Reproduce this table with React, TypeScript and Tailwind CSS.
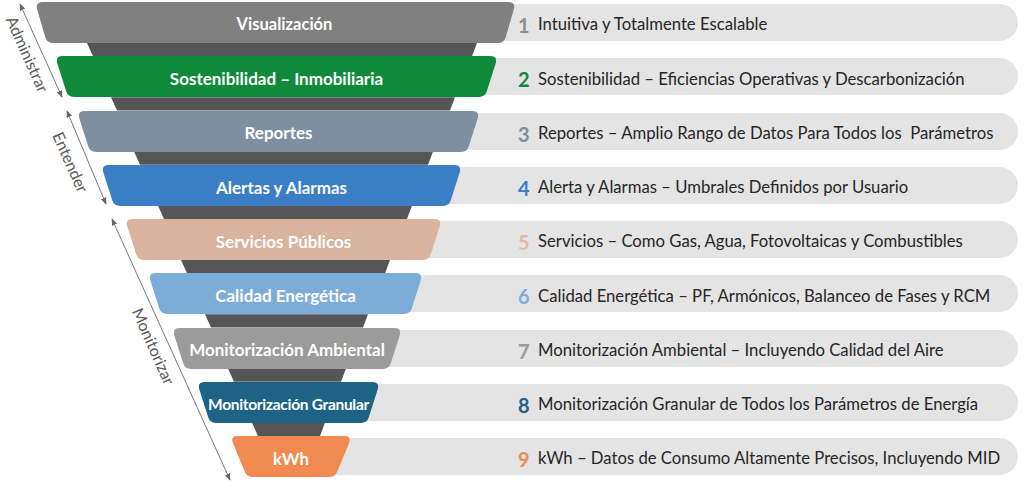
import React from 'react';

type Row = {
  n: string;
  band: string;
  desc: string;
  fill: string;
  numClass: string;
  bandClass: string;
  labelClass: string;
  width: number;
  inset: number;
};

const rows: Row[] = [
  { n: '1', band: 'Visualización', desc: 'Intuitiva y Totalmente Escalable', fill: '#808080', numClass: 'text-[#8c8c8c]', bandClass: 'ml-[35px] w-[481px]', labelClass: 'text-[16.5px] pl-[18px]', width: 481, inset: 12 },
  { n: '2', band: 'Sostenibilidad – Inmobiliaria', desc: 'Sostenibilidad – Eficiencias Operativas y Descarbonización', fill: '#0f8a3b', numClass: 'text-[#148a3f]', bandClass: 'ml-[55px] w-[443px]', labelClass: 'text-[17px]', width: 443, inset: 13 },
  { n: '3', band: 'Reportes', desc: 'Reportes – Amplio Rango de Datos Para Todos los  Parámetros', fill: '#7e8fa1', numClass: 'text-[#7e8fa1]', bandClass: 'ml-[77px] w-[403px]', labelClass: 'text-[17px]', width: 403, inset: 13 },
  { n: '4', band: 'Alertas y Alarmas', desc: 'Alerta y Alarmas – Umbrales Definidos por Usuario', fill: '#3a7ec6', numClass: 'text-[#3a7ec6]', bandClass: 'ml-[101px] w-[361px]', labelClass: 'text-[17px]', width: 361, inset: 13 },
  { n: '5', band: 'Servicios Públicos', desc: 'Servicios – Como Gas, Agua, Fotovoltaicas y Combustibles', fill: '#d8b39d', numClass: 'text-[#e2bba4]', bandClass: 'ml-[125px] w-[317px]', labelClass: 'text-[17px]', width: 317, inset: 13 },
  { n: '6', band: 'Calidad Energética', desc: 'Calidad Energética – PF, Armónicos, Balanceo de Fases y RCM', fill: '#7eacd9', numClass: 'text-[#7eacd9]', bandClass: 'ml-[148px] w-[275px]', labelClass: 'text-[17px]', width: 275, inset: 13 },
  { n: '7', band: 'Monitorización Ambiental', desc: 'Monitorización Ambiental – Incluyendo Calidad del Aire', fill: '#9b9b9b', numClass: 'text-[#9b9b9b]', bandClass: 'ml-[172px] w-[230px]', labelClass: 'text-[17px]', width: 230, inset: 13 },
  { n: '8', band: 'Monitorización Granular', desc: 'Monitorización Granular de Todos los Parámetros de Energía', fill: '#1c6386', numClass: 'text-[#1c6386]', bandClass: 'ml-[197px] w-[183px]', labelClass: 'text-[15.5px] tracking-[-0.3px]', width: 183, inset: 13 },
  { n: '9', band: 'kWh', desc: 'kWh – Datos de Consumo Altamente Precisos, Incluyendo MID', fill: '#f08a50', numClass: 'text-[#f08a50]', bandClass: 'ml-[230px] w-[122px]', labelClass: 'text-[17px]', width: 122, inset: 17 },
];

// dark funnel pieces visible between the bands
const connectors = [
  'ml-[87px] w-[390px]',
  'ml-[111px] w-[344px]',
  'ml-[134px] w-[299px]',
  'ml-[158px] w-[254px]',
  'ml-[181px] w-[209px]',
  'ml-[205px] w-[163px]',
  'ml-[228px] w-[118px]',
  'ml-[252px] w-[73px]',
];

const BAND_H = 41;

function trapezoidPath(w: number, h: number, inset: number) {
  const pts = [
    [0, 0],
    [w, 0],
    [w - inset, h],
    [inset, h],
  ];
  const radii = [8, 8, 6, 6];
  let d = '';
  pts.forEach((p, i) => {
    const prev = pts[(i + 3) % 4];
    const next = pts[(i + 1) % 4];
    const r = radii[i];
    const toward = (q: number[]) => {
      const dx = q[0] - p[0];
      const dy = q[1] - p[1];
      const len = Math.hypot(dx, dy);
      return [p[0] + (dx / len) * r, p[1] + (dy / len) * r];
    };
    const a = toward(prev);
    const b = toward(next);
    d += `${i === 0 ? 'M' : 'L'}${a[0]},${a[1]} Q${p[0]},${p[1]} ${b[0]},${b[1]} `;
  });
  return d + 'Z';
}

function Band({ row }: { row: Row }) {
  return (
    <div className={`${row.bandClass} [grid-area:1/1] relative z-10 grid`}>
      <svg className="[grid-area:1/1]" width={row.width} height={BAND_H}>
        <path d={trapezoidPath(row.width, BAND_H, row.inset)} fill={row.fill} />
      </svg>
      <span className={`${row.labelClass} [grid-area:1/1] self-center justify-self-center whitespace-nowrap pt-[4px] font-bold text-white`}>
        {row.band}
      </span>
    </div>
  );
}

function Axis() {
  const arrows = [
    { x1: 20, y1: 4, x2: 62, y2: 97 },
    { x1: 67, y1: 111, x2: 106, y2: 204 },
    { x1: 112, y1: 219, x2: 230, y2: 480 },
  ];
  const labels = [
    { text: 'Administrar', x: 28, y: 54 },
    { text: 'Entender', x: 71, y: 162 },
    { text: 'Monitorizar', x: 154, y: 346 },
  ];
  return (
    <svg className="absolute left-0 top-0 pointer-events-none" width={260} height={488}>
      <defs>
        <marker id="head" viewBox="0 0 10 10" refX="9" refY="5" markerWidth="7" markerHeight="7" orient="auto-start-reverse">
          <path d="M0,1 L10,5 L0,9 Z" fill="#666" />
        </marker>
      </defs>
      {arrows.map((a, i) => (
        <line key={i} {...a} stroke="#777" strokeWidth={1} markerStart="url(#head)" markerEnd="url(#head)" />
      ))}
      {labels.map((l) => (
        <text
          key={l.text}
          x={l.x}
          y={l.y}
          transform={`rotate(66 ${l.x} ${l.y})`}
          textAnchor="middle"
          dominantBaseline="central"
          fontSize={16}
          fill="#5a5a5a"
          fontFamily="Lato, 'Open Sans', sans-serif"
        >
          {l.text}
        </text>
      ))}
    </svg>
  );
}

export default function App() {
  return (
    <div className="relative w-[1024px] h-[488px] overflow-hidden bg-white pt-[2px] font-['Lato','Open_Sans',sans-serif]">
      {rows.map((row, i) => (
        <React.Fragment key={row.n}>
          <div className="grid h-[41px]">
            <div className="[grid-area:1/1] ml-[300px] mr-[6px] flex h-[37px] items-center self-center rounded-r-full bg-[#e4e4e4] pl-[218px] pt-[5px]">
              <span className={`${row.numClass} w-[20px] text-[20px] font-bold leading-none`}>{row.n}</span>
              <span className="whitespace-pre text-[16.7px] text-[#262626]">{row.desc}</span>
            </div>
            <Band row={row} />
          </div>
          {i < connectors.length && (
            <div className={`${connectors[i]} h-[13.25px] bg-[#555555] [clip-path:polygon(0_0,100%_0,calc(100%-5px)_100%,6px_100%)]`} />
          )}
        </React.Fragment>
      ))}
      <Axis />
    </div>
  );
}
